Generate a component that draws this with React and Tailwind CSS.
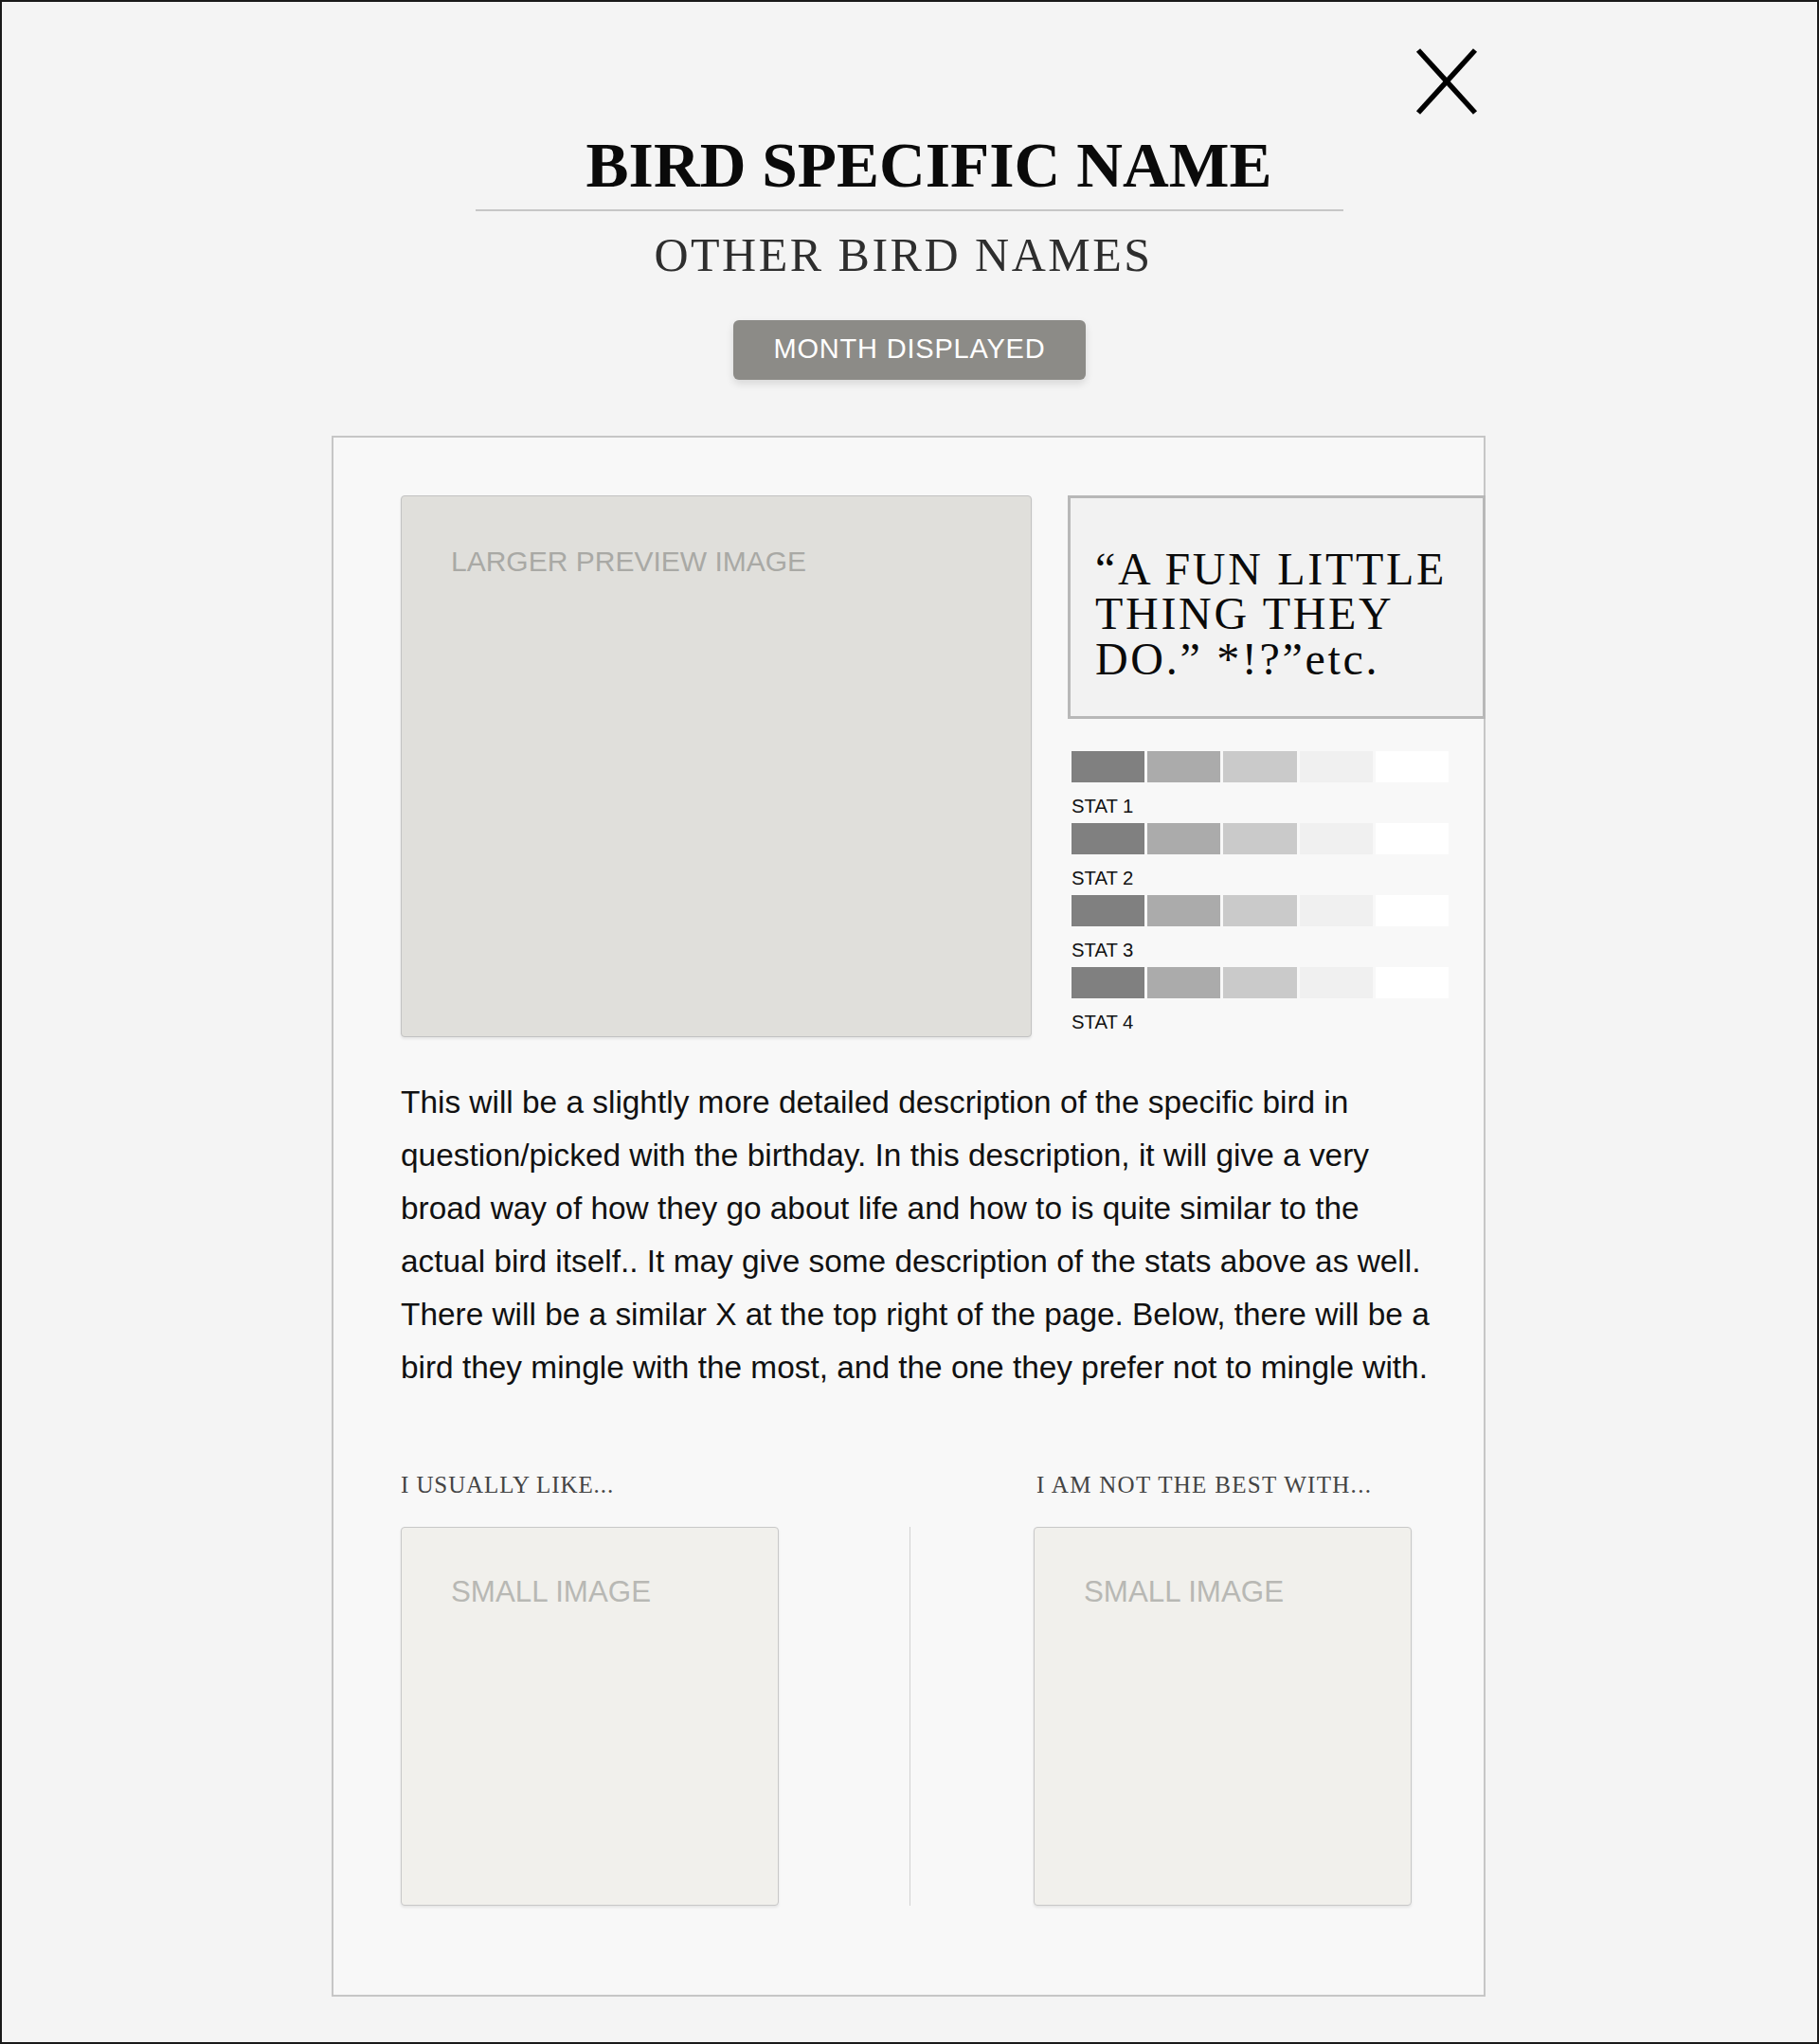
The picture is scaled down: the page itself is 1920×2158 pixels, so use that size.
import React from "react";

const SANS = "font-['Liberation_Sans',sans-serif]";
const SERIF = "font-['Liberation_Serif','DejaVu_Serif',serif]";

function StatBar({ label }) {
  const colors = ["bg-[#808080]", "bg-[#ababab]", "bg-[#cacaca]", "bg-[#f0f0f0]", "bg-[#ffffff]"];
  return (
    <div className="flex flex-col">
      <div className="flex h-[33px] w-[398px] ml-[4px] gap-[3px]">
        {colors.map((c, i) => (
          <div key={i} className={`flex-1 ${c}`} />
        ))}
      </div>
      <div className={`${SANS} ml-[4px] pt-[15px] pb-[7px] h-[43px] text-[20.3px] leading-[21px] text-[#111]`}>
        {label}
      </div>
    </div>
  );
}

function SmallImage() {
  return (
    <div className="w-[399px] h-[400px] rounded-[4px] border border-[#c8c8c8] bg-[#f1f0ec] shadow-[0_2px_3px_rgba(0,0,0,0.08)] pl-[52px] pt-[52px]">
      <div className={`${SANS} text-[31.3px] leading-none text-[#b8b8b4]`}>SMALL IMAGE</div>
    </div>
  );
}

export default function App() {
  return (
    <div className="relative w-[1920px] h-[2158px] bg-[#f4f4f4] border-2 border-[#1a1a1a] flex flex-col items-center overflow-hidden">
      {/* close button */}
      <button className="absolute left-[1492px] top-[49px] w-[66px] h-[70px]" aria-label="Close">
        <svg width="66" height="70" viewBox="0 0 66 70">
          <line x1="3" y1="2" x2="63" y2="68" stroke="#000" strokeWidth="5.5" />
          <line x1="63" y1="2" x2="3" y2="68" stroke="#000" strokeWidth="5.5" />
        </svg>
      </button>

      {/* header */}
      <div className="pt-[139px] flex flex-col items-center">
        <h1 className={`${SERIF} ml-[41px] font-bold text-[67.5px] leading-none text-[#0a0a0a]`}>
          BIRD SPECIFIC NAME
        </h1>
        <div className="mt-[12px] w-[916px] h-[2px] bg-[#c6c6c6]" />
        <h2 className={`${SERIF} ml-[-13px] font-normal mt-[21px] text-[50px] leading-none text-[#2e2e2e] tracking-[2.5px]`}>
          OTHER BIRD NAMES
        </h2>
        <div
          className={`${SANS} mt-[44px] w-[372px] h-[63px] rounded-[6px] bg-[#8c8b87] shadow-[0_4px_8px_rgba(0,0,0,0.12)] flex items-center justify-center text-white text-[29px] tracking-[0.8px]`}
        >
          MONTH DISPLAYED
        </div>
      </div>

      {/* card */}
      <div className="mt-[59px] ml-[-2px] w-[1218px] h-[1648px] border-2 border-[#c6c6c6] bg-[#f8f8f8] pl-[71px] pt-[61px] flex flex-col">
        <div className="flex">
          <div className="w-[666px] h-[572px] rounded-[4px] border border-[#c2c2c2] bg-[#e0dfdb] shadow-[0_2px_3px_rgba(0,0,0,0.08)] pl-[52px] pt-[54px]">
            <div className={`${SANS} text-[30px] leading-none text-[#a9a9a5]`}>LARGER PREVIEW IMAGE</div>
          </div>
          <div className="ml-[38px] mr-[-2px] flex-1 flex flex-col">
            <div className="h-[236px] border-[3px] border-[#b8b8b8] bg-[#f2f2f2] pl-[26px] pt-[51px]">
              <p className={`${SERIF} text-[48px] leading-[47.5px] tracking-[2.7px] text-[#0a0a0a]`}>
                “A FUN LITTLE
                <br />
                THING THEY
                <br />
                DO.” *!?”etc.
              </p>
            </div>
            <div className="mt-[34px] flex flex-col">
              <StatBar label="STAT 1" />
              <StatBar label="STAT 2" />
              <StatBar label="STAT 3" />
              <StatBar label="STAT 4" />
            </div>
          </div>
        </div>

        <p className={`${SANS} mt-[39px] text-[33.4px] leading-[56px] text-[#111] whitespace-nowrap`}>
          This will be a slightly more detailed description of the specific bird in
          <br />
          question/picked with the birthday. In this description, it will give a very
          <br />
          broad way of how they go about life and how to is quite similar to the
          <br />
          actual bird itself.. It may give some description of the stats above as well.
          <br />
          There will be a similar X at the top right of the page. Below, there will be a
          <br />
          bird they mingle with the most, and the one they prefer not to mingle with.
        </p>

        <div className="mt-[83px] grid grid-cols-[668px_399px]">
          <div className={`${SERIF} text-[25px] leading-none tracking-[0.9px] text-[#444]`}>I USUALLY LIKE...</div>
          <div className={`${SERIF} pl-[3px] text-[25px] leading-none tracking-[1.3px] text-[#444] whitespace-nowrap`}>
            I AM NOT THE BEST WITH...
          </div>
        </div>

        <div className="mt-[32px] flex">
          <SmallImage />
          <div className="w-[138px]" />
          <div className="w-px h-[400px] bg-[#d2d2d2]" />
          <div className="w-[130px]" />
          <SmallImage />
        </div>
      </div>
    </div>
  );
}
